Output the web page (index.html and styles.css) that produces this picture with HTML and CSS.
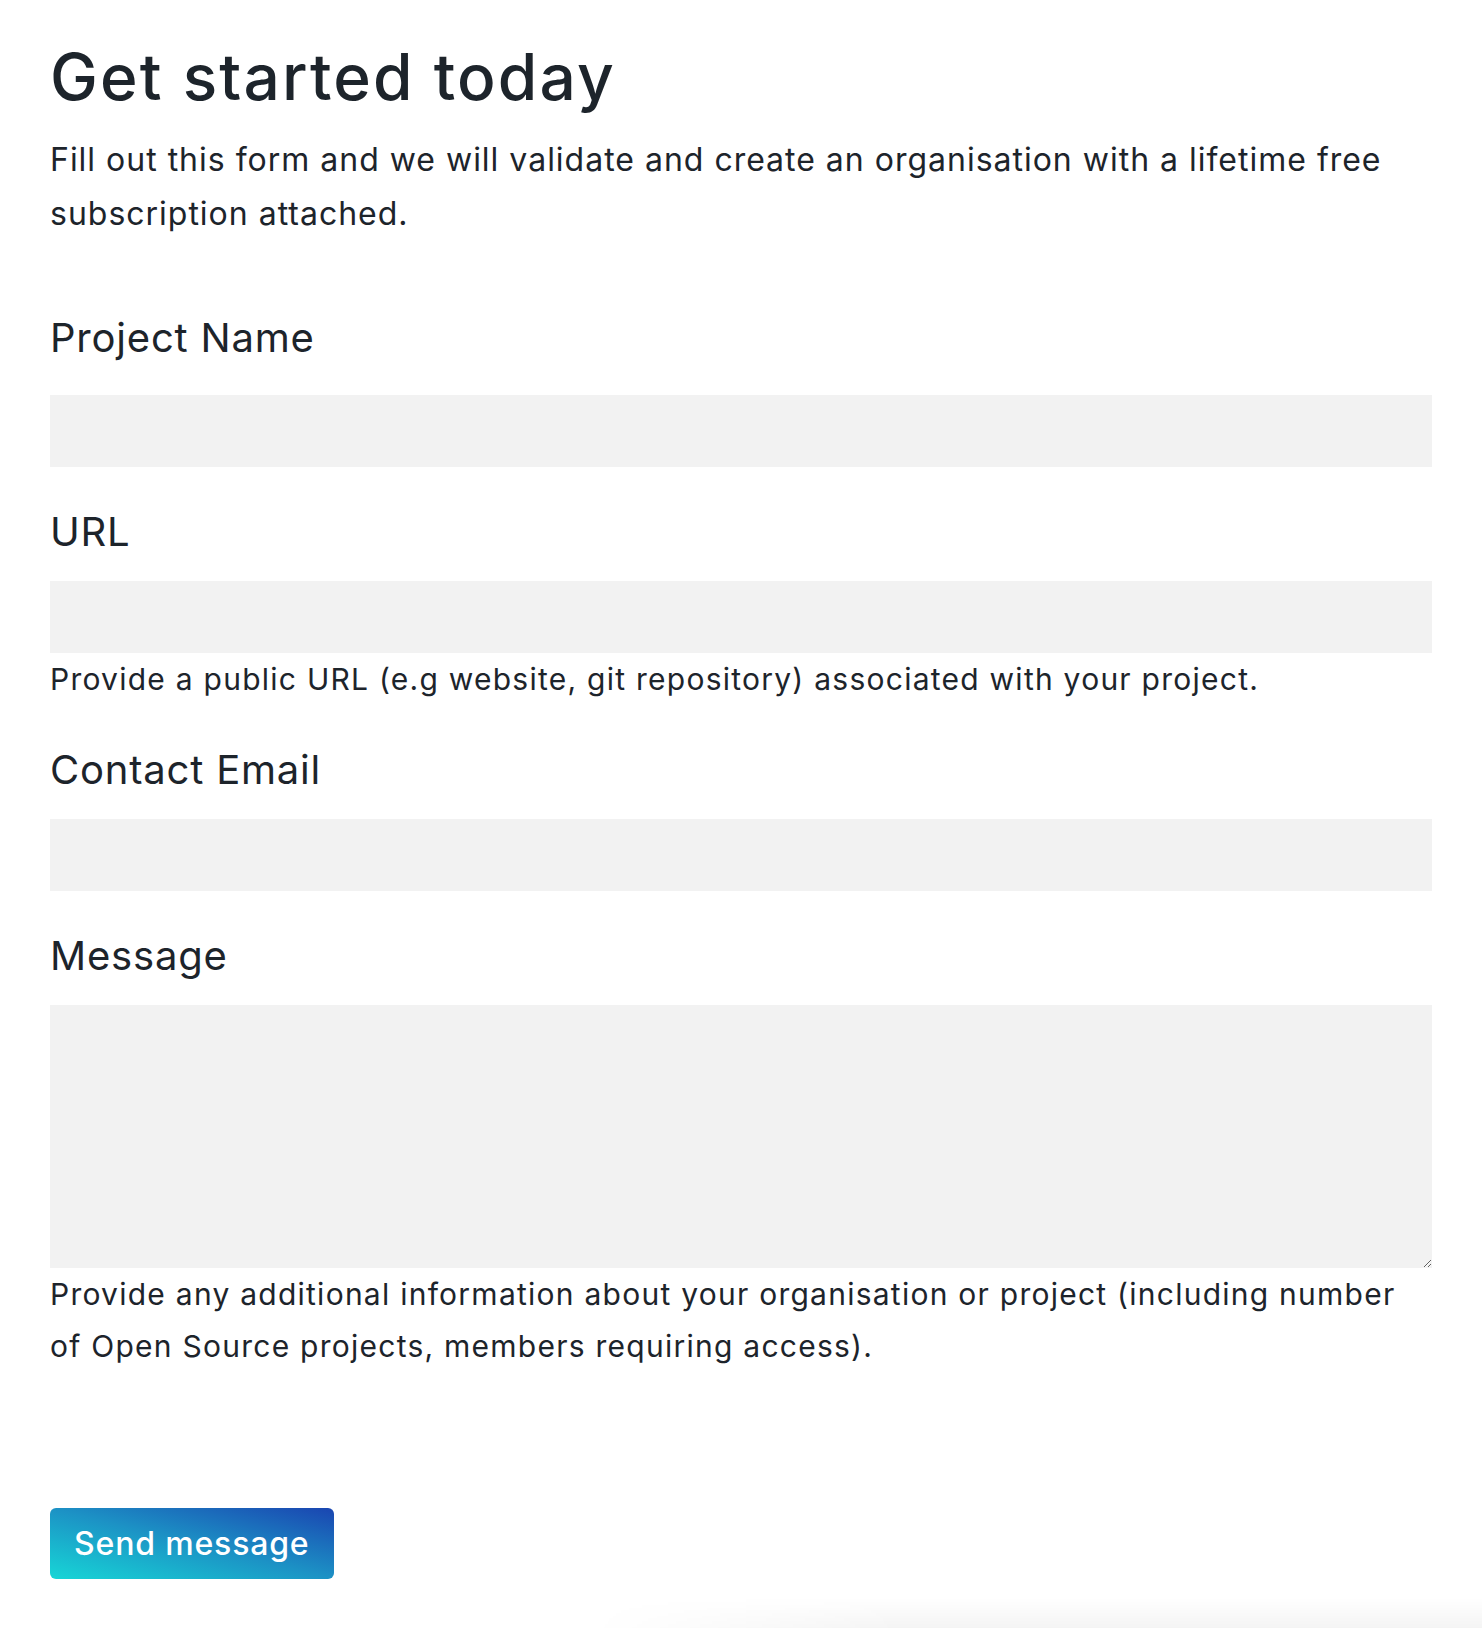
FILE: index.html
```html
<!DOCTYPE html>
<html lang="en">
<head>
<meta charset="utf-8">
<title>Get started today</title>
<link rel="stylesheet" href="styles.css">
</head>
<body>
<main class="page">
  <h1 class="title">Get started today</h1>
  <p class="intro">Fill out this form and we will validate and create an organisation with a lifetime free subscription attached.</p>
  <form class="form">
    <div class="field field-first">
      <label class="label" for="name">Project Name</label>
      <input class="input" id="name" type="text">
    </div>
    <div class="field">
      <label class="label" for="url">URL</label>
      <input class="input" id="url" type="text">
      <p class="help">Provide a public URL (e.g website, git repository) associated with your project.</p>
    </div>
    <div class="field">
      <label class="label" for="email">Contact Email</label>
      <input class="input" id="email" type="email">
    </div>
    <div class="field">
      <label class="label" for="msg">Message</label>
      <textarea class="input textarea" id="msg"></textarea>
      <p class="help">Provide any additional information about your organisation or project (including number of Open Source projects, members requiring access).</p>
    </div>
    <button class="button" type="button">Send message</button>
  </form>
  <div class="fade"></div>
</main>
</body>
</html>
```
FILE: styles.css
```css
html, body {
  margin: 0;
  padding: 0;
  background: #ffffff;
}
body {
  font-family: Inter, "Open Sans", sans-serif;
  color: #1d242b;
  overflow: hidden;
}
.page {
  width: 1382px;
  padding: 38px 50px 0;
}
.title {
  margin: 0;
  font-size: 64px;
  line-height: 77px;
  font-weight: 450;
  letter-spacing: 0.033em;
}
.intro {
  margin: 18px 0 0;
  font-size: 32px;
  line-height: 54px;
  font-weight: 400;
  letter-spacing: 0.031em;
}
.form {
  margin-top: 73px;
}
.field {
  margin-top: 41px;
}
.field-first {
  margin-top: 0;
}
.label {
  display: block;
  font-size: 40px;
  line-height: 48px;
  font-weight: 400;
  letter-spacing: 0.02em;
  margin-bottom: 25px;
}
.field-first .label {
  margin-bottom: 33px;
}
.input {
  display: block;
  box-sizing: border-box;
  width: 100%;
  height: 72px;
  border: none;
  border-radius: 0;
  background: #f2f2f2;
  margin: 0;
  padding: 12px 20px;
  font: inherit;
  font-size: 30px;
  outline: none;
}
.textarea {
  height: 263px;
  margin-top: 1px;
  resize: vertical;
}
.help {
  margin: 0;
  font-size: 30px;
  line-height: 52px;
  letter-spacing: 1.25px;
}
.button {
  display: block;
  margin-top: 136px;
  height: 71px;
  padding: 0 24px;
  border: none;
  border-radius: 6px;
  background: linear-gradient(to top right, #17d6d6 0%, #1c92c5 50%, #1a45b1 100%);
  color: #ffffff;
  font-family: inherit;
  font-size: 32px;
  font-weight: 550;
  letter-spacing: 0.026em;
  cursor: pointer;
}
.fade {
  margin: 19px -50px 0 540px;
  height: 30px;
  background: linear-gradient(to bottom, rgba(0,0,0,0), rgba(0,0,0,0.045));
  -webkit-mask-image: linear-gradient(to right, transparent 0%, #000 35%, #000 100%);
  mask-image: linear-gradient(to right, transparent 0%, #000 35%, #000 100%);
}
```
